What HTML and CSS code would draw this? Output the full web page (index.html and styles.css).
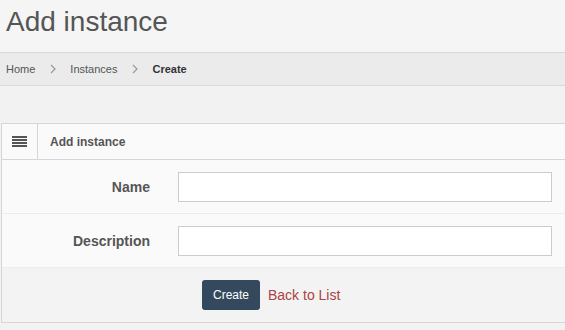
FILE: index.html
```html
<!DOCTYPE html>
<html lang="en">
<head>
    <meta charset="UTF-8">
    <meta name="viewport" content="width=device-width, initial-scale=1.0">
    <title>Add instance</title>
    <link rel="stylesheet" href="styles.css">
</head>
<body>
    <header class="page-header">
        <h1>Add instance</h1>
    </header>

    <nav class="breadcrumb">
        <a href="#">Home</a>
        <svg class="sep" width="6" height="10" viewBox="0 0 6 10"><path d="M1 1 L5 5 L1 9" fill="none" stroke="#999" stroke-width="1.2"/></svg>
        <a href="#">Instances</a>
        <svg class="sep" width="6" height="10" viewBox="0 0 6 10"><path d="M1 1 L5 5 L1 9" fill="none" stroke="#999" stroke-width="1.2"/></svg>
        <span class="current">Create</span>
    </nav>

    <main>
        <div class="panel">
            <div class="panel-head">
                <div class="panel-icon">
                    <svg width="15" height="11" viewBox="0 0 15 11">
                        <rect x="0" y="0" width="15" height="2" fill="#555"/>
                        <rect x="0" y="3" width="15" height="2" fill="#555"/>
                        <rect x="0" y="6" width="15" height="2" fill="#555"/>
                        <rect x="0" y="9" width="15" height="2" fill="#555"/>
                    </svg>
                </div>
                <div class="panel-title">Add instance</div>
            </div>
            <form class="panel-body">
                <div class="form-row">
                    <label for="name">Name</label>
                    <input type="text" id="name">
                </div>
                <div class="form-row">
                    <label for="description">Description</label>
                    <input type="text" id="description">
                </div>
                <div class="form-actions">
                    <button type="submit" class="btn">Create</button>
                    <a href="#" class="back-link">Back to List</a>
                </div>
            </form>
        </div>
    </main>
</body>
</html>
```

FILE: styles.css
```css
* {
    margin: 0;
    padding: 0;
    box-sizing: border-box;
}

body {
    font-family: "Liberation Sans", Arial, sans-serif;
    color: #555;
    background-color: #f2f2f2;
    overflow: hidden;
}

.page-header {
    background-color: #f5f5f5;
    padding: 6px 6px 0;
    height: 52px;
}

.page-header h1 {
    font-size: 28px;
    font-weight: normal;
    line-height: 32px;
    color: #555;
}

.breadcrumb {
    display: flex;
    align-items: center;
    height: 34px;
    padding: 0 6px;
    background-color: #ebebeb;
    border-top: 1px solid #d8d8d8;
    border-bottom: 1px solid #d8d8d8;
    font-size: 11px;
}

.breadcrumb a {
    color: #555;
    text-decoration: none;
}

.breadcrumb .sep {
    margin: 0 14px 0 15px;
}

.breadcrumb .current {
    color: #333;
    font-weight: bold;
}

main {
    padding: 37px 0 0 1px;
}

.panel {
    margin-right: -10px;
    background-color: #fafafa;
    border: 1px solid #d6d6d6;
}

.panel-head {
    display: flex;
    height: 36px;
    border-bottom: 1px solid #d6d6d6;
}

.panel-icon {
    width: 36px;
    display: flex;
    align-items: center;
    justify-content: center;
    border-right: 1px solid #d6d6d6;
}

.panel-title {
    display: flex;
    align-items: center;
    padding-left: 12px;
    font-size: 12px;
    font-weight: bold;
    color: #555;
}

.form-row {
    display: flex;
    align-items: center;
    height: 54px;
    border-bottom: 1px solid #ececec;
}

.form-row label {
    width: 148px;
    text-align: right;
    font-size: 14px;
    font-weight: bold;
    color: #555;
}

.form-row input {
    margin-left: 28px;
    width: 374px;
    height: 30px;
    border: 1px solid #ccc;
    background-color: #fff;
}

.form-actions {
    display: flex;
    align-items: center;
    height: 54px;
    padding-left: 200px;
    background-color: #f3f3f3;
}

.btn {
    background-color: #34495e;
    color: #fff;
    border: none;
    border-radius: 3px;
    width: 58px;
    height: 30px;
    font-family: inherit;
    font-size: 12px;
}

.back-link {
    margin-left: 8px;
    color: #a94442;
    font-size: 14px;
    text-decoration: none;
}
```
